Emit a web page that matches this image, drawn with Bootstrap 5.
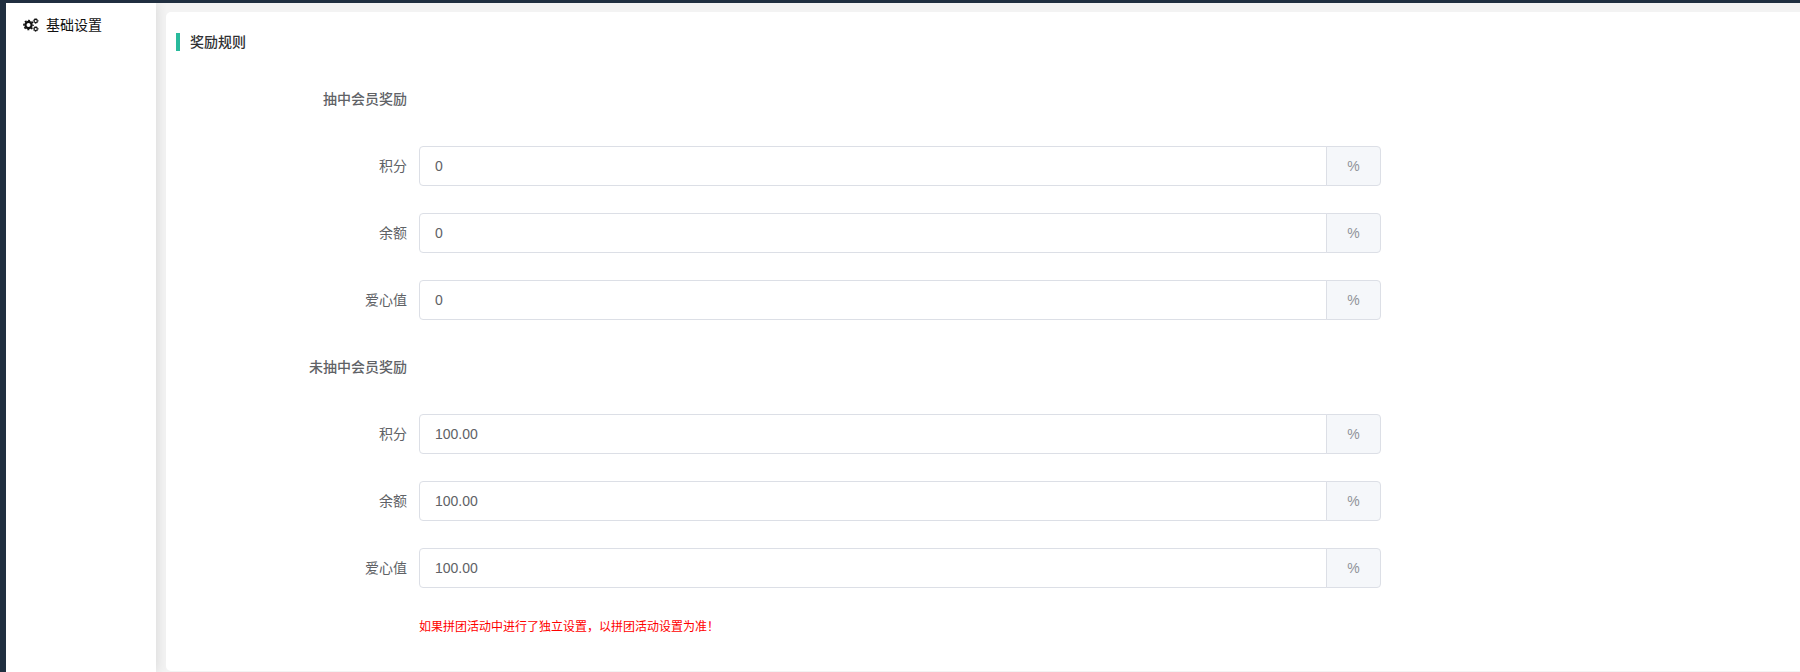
<!DOCTYPE html>
<html lang="zh-CN">
<head>
<meta charset="utf-8">
<meta name="viewport" content="width=device-width, initial-scale=1">
<title>基础设置</title>
<link href="https://cdn.jsdelivr.net/npm/bootstrap@5.3.0/dist/css/bootstrap.min.css" rel="stylesheet">
<style>
  body { background: #202f40; color: #303133; font-family: "Liberation Sans", "Noto Sans CJK SC", sans-serif; font-size: 14px; line-height: 20px; }
  .app-shell { padding: 3px 0 0 6px; }
  .side { width: 150px; z-index: 1; box-shadow: 0 0 12px rgba(0, 0, 0, .12); clip-path: inset(0 -10px 0 0); }
  .side a { color: #111; padding: 12px 17px; gap: 7px; }
  .main-area { background: #f3f3f3; padding: 9px 0 1px 10px; }
  .panel { border-radius: 5px 0 0 5px; padding: 21px 7px 32px 10px; }
  .panel-title { font-size: 14px; line-height: 18px; font-weight: 500; border-left: 4px solid #29ba9c; padding-left: 10px; margin: 0 0 28px; }
  .form-line { margin-bottom: 27px; }
  .line-label { width: 243px; padding-right: 12px; line-height: 40px; color: #606266; font-size: 14px; }
  .group-name { font-weight: 500; }
  .input-group { width: 70%; }
  .input-group .form-control { height: 40px; padding: 0 15px; border-color: #dcdfe6; border-radius: 4px; color: #606266; font-size: 14px; }
  .input-group .input-group-text { padding: 0 20px; border-color: #dcdfe6; border-radius: 4px; background: #f5f7fa; color: #909399; font-size: 14px; }
  .hint { margin: 0 0 0 243px; font-size: 12px; line-height: 24px; color: #f00; }
</style>
</head>
<body>
<div class="app-shell d-flex min-vh-100">
  <nav class="side bg-white position-relative flex-shrink-0" aria-label="设置">
    <a href="#" class="d-flex align-items-center text-decoration-none">
      <svg width="16" height="14" viewBox="0 0 16 14" fill="none" stroke="#111" aria-hidden="true">
        <circle cx="5.5" cy="7" r="3.1" stroke-width="2.2"/>
        <circle cx="5.5" cy="7" r="4.6" stroke-width="1.5" stroke-dasharray="1.9 1.713" stroke-dashoffset=".95"/>
        <circle cx="12.7" cy="3" r="1.6" stroke-width="1.1"/>
        <circle cx="12.7" cy="3" r="2.4" stroke-width=".9" stroke-dasharray="1 .885" stroke-dashoffset=".5"/>
        <circle cx="12.7" cy="11" r="1.6" stroke-width="1.1"/>
        <circle cx="12.7" cy="11" r="2.4" stroke-width=".9" stroke-dasharray="1 .885" stroke-dashoffset=".5"/>
      </svg>
      <span>基础设置</span>
    </a>
  </nav>
  <main class="main-area flex-grow-1">
    <form class="panel bg-white h-100">
      <h1 class="panel-title">奖励规则</h1>

      <div class="form-line d-flex"><div class="line-label group-name text-end">抽中会员奖励</div></div>
      <div class="form-line d-flex">
        <label class="line-label text-end flex-shrink-0" for="win-point">积分</label>
        <div class="flex-grow-1"><div class="input-group"><input id="win-point" class="form-control" type="text" value="0"><span class="input-group-text">%</span></div></div>
      </div>
      <div class="form-line d-flex">
        <label class="line-label text-end flex-shrink-0" for="win-balance">余额</label>
        <div class="flex-grow-1"><div class="input-group"><input id="win-balance" class="form-control" type="text" value="0"><span class="input-group-text">%</span></div></div>
      </div>
      <div class="form-line d-flex">
        <label class="line-label text-end flex-shrink-0" for="win-love">爱心值</label>
        <div class="flex-grow-1"><div class="input-group"><input id="win-love" class="form-control" type="text" value="0"><span class="input-group-text">%</span></div></div>
      </div>

      <div class="form-line d-flex"><div class="line-label group-name text-end">未抽中会员奖励</div></div>
      <div class="form-line d-flex">
        <label class="line-label text-end flex-shrink-0" for="lose-point">积分</label>
        <div class="flex-grow-1"><div class="input-group"><input id="lose-point" class="form-control" type="text" value="100.00"><span class="input-group-text">%</span></div></div>
      </div>
      <div class="form-line d-flex">
        <label class="line-label text-end flex-shrink-0" for="lose-balance">余额</label>
        <div class="flex-grow-1"><div class="input-group"><input id="lose-balance" class="form-control" type="text" value="100.00"><span class="input-group-text">%</span></div></div>
      </div>
      <div class="form-line d-flex">
        <label class="line-label text-end flex-shrink-0" for="lose-love">爱心值</label>
        <div class="flex-grow-1"><div class="input-group"><input id="lose-love" class="form-control" type="text" value="100.00"><span class="input-group-text">%</span></div></div>
      </div>
      <p class="hint">如果拼团活动中进行了独立设置，以拼团活动设置为准！</p>
    </form>
  </main>
</div>
<script src="https://cdn.jsdelivr.net/npm/bootstrap@5.3.0/dist/js/bootstrap.bundle.min.js"></script>
</body>
</html>
